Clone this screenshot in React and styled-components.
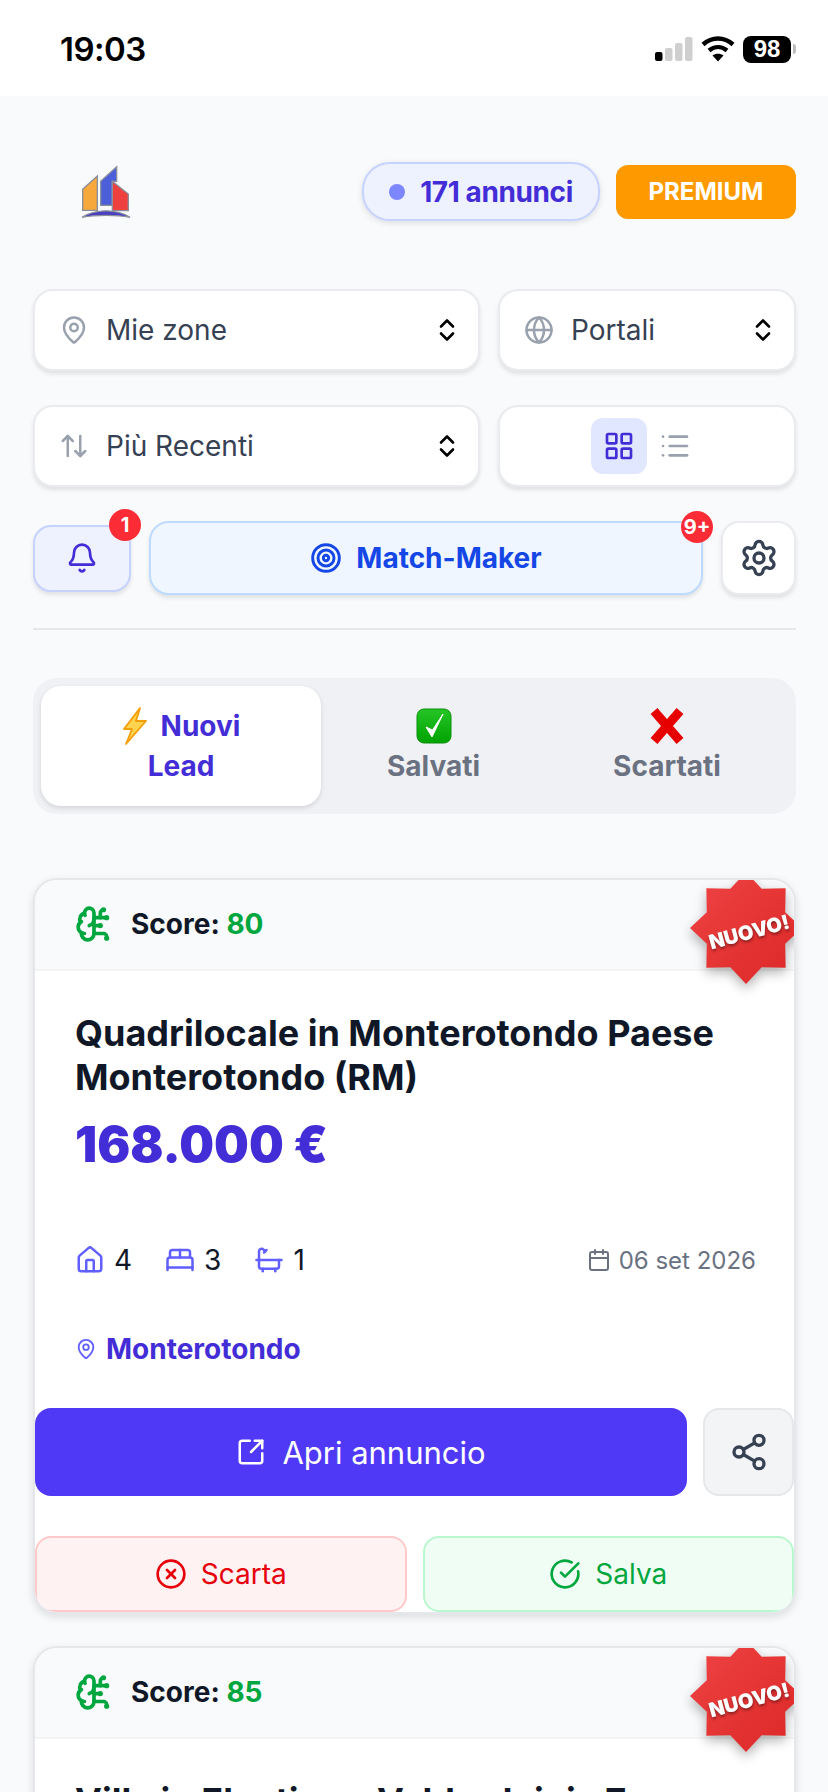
import React from "react"
import styled, { createGlobalStyle } from "styled-components"
import {
  MapPin,
  Globe,
  ArrowUpDown,
  LayoutGrid,
  List,
  Bell,
  Target,
  Settings,
  BrainCircuit,
  House,
  BedDouble,
  Bath,
  Calendar,
  SquareArrowOutUpRight,
  Share2,
  CircleX,
  CircleCheckBig,
} from "lucide-react"

const GlobalStyle = createGlobalStyle`
  * {
    box-sizing: border-box;
  }
  html, body {
    margin: 0;
    height: 1792px;
    overflow: hidden;
    background: #f9fafb;
    font-family: Inter, "Liberation Sans", sans-serif;
  }
`

const Page = styled.div`
  width: 828px;
  height: 1792px;
  overflow: hidden;
`

const StatusBar = styled.div`
  height: 96px;
  background: #fff;
  display: flex;
  align-items: center;
  justify-content: space-between;
  padding: 2px 32px 0 60px;
  color: #000;
`

const Clock = styled.span`
  font-family: Inter, sans-serif;
  font-size: 33px;
  font-weight: 600;
  letter-spacing: -0.5px;
`

const StatusIcons = styled.div`
  display: flex;
  align-items: center;
  gap: 8px;
`

const Battery = styled.div`
  display: flex;
  align-items: center;
  gap: 2px;
`

const BatteryBody = styled.span`
  width: 48px;
  height: 27px;
  border-radius: 8px;
  background: #000;
  color: #fff;
  font-family: "Liberation Sans", sans-serif;
  font-size: 24px;
  font-weight: 700;
  display: flex;
  align-items: center;
  justify-content: center;
`

const BatteryTip = styled.span`
  width: 3px;
  height: 10px;
  border-radius: 0 3px 3px 0;
  background: #bdbdbd;
`

const Content = styled.div`
  padding: 66px 32px 0 33px;
`

const Header = styled.div`
  display: flex;
  align-items: center;
  gap: 16px;
  height: 59px;
`

const LogoWrap = styled.div`
  flex: 1;
  padding-left: 27px;
  display: flex;
  align-items: center;
  svg {
    filter: blur(0.5px);
  }
`

const CountPill = styled.div`
  width: 238px;
  height: 59px;
  border-radius: 28px;
  border: 2px solid #c6d2ff;
  background: #eef2ff;
  color: #432dd7;
  font-size: 28px;
  font-weight: 700;
  letter-spacing: -0.4px;
  display: flex;
  align-items: center;
  justify-content: center;
  gap: 15px;
  box-shadow: 0 2px 6px rgba(0, 0, 0, 0.12);
`

const Dot = styled.span`
  width: 16px;
  height: 16px;
  border-radius: 50%;
  background: #7c86ff;
`

const PremiumButton = styled.div`
  width: 180px;
  height: 54px;
  border-radius: 12px;
  background: #fe9a00;
  color: #fff;
  font-size: 24px;
  font-weight: 700;
  display: flex;
  align-items: center;
  justify-content: center;
`

const FilterGrid = styled.div`
  display: grid;
  grid-template-columns: 447px 298px;
  column-gap: 18px;
  row-gap: 34px;
  margin-top: 68px;
`

const FilterBox = styled.div`
  height: 82px;
  border-radius: 20px;
  border: 2px solid #e9ebee;
  background: #fff;
  box-shadow: 0 3px 4px rgba(0, 0, 0, 0.1);
  display: flex;
  align-items: center;
  justify-content: ${(props) => (props.$center ? "center" : "flex-start")};
  padding: ${(props) => (props.$center ? "0" : "0 22px 0 24px")};
  gap: 17px;
  color: #364153;
  font-size: 28px;
`

const FilterLabel = styled.span`
  flex: 1;
`

const ViewButton = styled.span`
  width: 56px;
  height: 56px;
  border-radius: 12px;
  background: ${(props) => (props.$active ? "#e0e7ff" : "transparent")};
  color: ${(props) => (props.$active ? "#432dd7" : "#99a1af")};
  display: flex;
  align-items: center;
  justify-content: center;
`

const ViewToggle = styled.div`
  display: flex;
  align-items: center;
`

const ActionRow = styled.div`
  display: flex;
  align-items: center;
  gap: 18px;
  margin-top: 34px;
`

const BellButton = styled.div`
  position: relative;
  width: 98px;
  height: 67px;
  border-radius: 18px;
  border: 2px solid #c6d2ff;
  background: #eef2ff;
  color: #432dd7;
  box-shadow: 0 3px 4px rgba(0, 0, 0, 0.1);
  display: flex;
  align-items: center;
  justify-content: center;
`

const MatchButton = styled.div`
  position: relative;
  width: 554px;
  height: 74px;
  border-radius: 20px;
  border: 2px solid #bedbff;
  background: #eff6ff;
  color: #1447e6;
  font-size: 28px;
  font-weight: 700;
  box-shadow: 0 3px 4px rgba(0, 0, 0, 0.1);
  display: flex;
  align-items: center;
  justify-content: center;
  gap: 14px;
`

const GearButton = styled.div`
  width: 75px;
  height: 74px;
  border-radius: 18px;
  border: 2px solid #e9ebee;
  background: #fff;
  color: #364153;
  box-shadow: 0 3px 4px rgba(0, 0, 0, 0.1);
  display: flex;
  align-items: center;
  justify-content: center;
`

const CountBadge = styled.span`
  position: absolute;
  top: ${(props) => props.$top}px;
  right: ${(props) => props.$right}px;
  width: 32px;
  height: 32px;
  border-radius: 50%;
  background: #fb2c36;
  color: #fff;
  font-size: 20px;
  font-weight: 700;
  display: flex;
  align-items: center;
  justify-content: center;
`

const Divider = styled.div`
  height: 2px;
  background: #e5e7eb;
  margin-top: 33px;
`

const Tabs = styled.div`
  display: grid;
  grid-template-columns: 280px 225px 1fr;
  height: 136px;
  margin-top: 48px;
  padding: 8px;
  border-radius: 24px;
  background: #f0f1f5;
`

const Tab = styled.div`
  border-radius: 20px;
  background: ${(props) => (props.$active ? "#fff" : "transparent")};
  color: ${(props) => (props.$active ? "#432dd7" : "#6a7282")};
  box-shadow: ${(props) =>
    props.$active ? "0 2px 5px rgba(0, 0, 0, 0.12)" : "none"};
  font-size: 28px;
  font-weight: 700;
  line-height: 40px;
  text-align: center;
  display: flex;
  flex-direction: column;
  align-items: center;
  justify-content: center;
`

const TabLine = styled.span`
  height: 40px;
  display: flex;
  align-items: center;
  justify-content: center;
  gap: 13px;
`

const Listing = styled.article`
  position: relative;
  margin-top: ${(props) => props.$gap}px;
  border-radius: 24px;
  border: 2px solid #e5e7eb;
  background: #fff;
  overflow: hidden;
  box-shadow: 0 3px 8px rgba(0, 0, 0, 0.12);
`

const ListingTop = styled.div`
  height: 91px;
  padding: 0 40px 2px;
  background: #f9fafb;
  border-bottom: 2px solid #f3f4f6;
  display: flex;
  align-items: center;
  gap: 18px;
  color: #00a63e;
`

const ScoreText = styled.span`
  color: #101828;
  font-size: 28px;
  font-weight: 700;
`

const ScoreValue = styled.span`
  color: #00a63e;
`

const StarWrap = styled.div`
  position: absolute;
  top: -8px;
  right: -8px;
  width: 112px;
  height: 112px;
  filter: drop-shadow(0 5px 6px rgba(0, 0, 0, 0.3));
`

const Star = styled.div`
  width: 100%;
  height: 100%;
  background: linear-gradient(135deg, #ef4444, #dc2626);
  clip-path: polygon(
    50% 0%, 64% 15%, 85.4% 14.6%, 85% 36%, 100% 50%, 85% 64%, 85.4% 85.4%,
    64% 85%, 50% 100%, 36% 85%, 14.6% 85.4%, 15% 64%, 0% 50%, 15% 36%,
    14.6% 14.6%, 36% 15%
  );
  display: flex;
  align-items: center;
  justify-content: center;
`

const StarText = styled.span`
  margin: 8px 0 0 6px;
  color: #fff;
  font-size: 20px;
  font-weight: 900;
  transform: rotate(-15deg);
  text-shadow: 0 2px 3px rgba(0, 0, 0, 0.4);
`

const ListingBody = styled.div`
  padding: 40px 38px 0 40px;
`

const Title = styled.h2`
  margin: 0;
  color: #101828;
  font-size: 36px;
  font-weight: 700;
  line-height: 44px;
`

const Price = styled.div`
  margin-top: 18px;
  color: #432dd7;
  font-size: 49px;
  font-weight: 900;
  line-height: 56px;
`

const MetaRow = styled.div`
  display: flex;
  align-items: center;
  justify-content: space-between;
  margin-top: 71px;
  height: 32px;
`

const Features = styled.div`
  display: flex;
  gap: 33px;
`

const Feature = styled.span`
  display: flex;
  align-items: center;
  gap: 9px;
  color: #101828;
  font-size: 28px;
  svg {
    color: #615fff;
  }
`

const DateLabel = styled.span`
  display: flex;
  align-items: center;
  gap: 8px;
  color: #6a7282;
  font-size: 24px;
`

const Place = styled.div`
  display: flex;
  align-items: center;
  gap: 9px;
  margin-top: 56px;
  color: #432dd7;
  font-size: 28px;
  font-weight: 700;
  svg {
    color: #615fff;
  }
`

const OpenRow = styled.div`
  display: flex;
  gap: 16px;
  margin-top: 42px;
`

const OpenButton = styled.div`
  width: 652px;
  height: 88px;
  border-radius: 16px;
  background: #4f39f6;
  color: #fff;
  font-size: 31px;
  font-weight: 400;
  display: flex;
  align-items: center;
  justify-content: center;
  gap: 16px;
`

const ShareButton = styled.div`
  flex: 1;
  height: 88px;
  border-radius: 16px;
  border: 2px solid #e5e7eb;
  background: #f3f4f6;
  color: #364153;
  display: flex;
  align-items: center;
  justify-content: center;
`

const DecisionRow = styled.div`
  display: grid;
  grid-template-columns: repeat(2, 1fr);
  gap: 16px;
  margin-top: 40px;
`

const DecisionButton = styled.div`
  height: 76px;
  border-radius: 16px;
  border: 2px solid ${(props) => (props.$kind === "save" ? "#b9f8cf" : "#ffc9c9")};
  background: ${(props) => (props.$kind === "save" ? "#f0fdf4" : "#fef2f2")};
  color: ${(props) => (props.$kind === "save" ? "#00a63e" : "#e7000b")};
  font-size: 28px;
  font-weight: 400;
  display: flex;
  align-items: center;
  justify-content: center;
  gap: 14px;
`

const SelectArrows = () => (
  <svg width="18" height="24" viewBox="0 0 18 24" fill="none" stroke="#000" strokeWidth="2.6" strokeLinecap="round" strokeLinejoin="round">
    <path d="M3 8.5 9 2.5l6 6" />
    <path d="M3 15.5l6 6 6-6" />
  </svg>
)

const Logo = () => (
  <svg width="90" height="80" viewBox="0 0 270 240">
    <g stroke="#8a8f9c" strokeWidth="4">
      <path d="M68 112 112 72v103H68Z" fill="#f6a83c" />
      <path d="M122 88 170 44v44h-13v72h-35Z" fill="#4c5fd8" />
      <path d="M157 88l48 38v50h-48Z" fill="#ef4040" />
    </g>
    <path d="M66 196c40-26 104-26 144 0-40-8-104-8-144 0Z" fill="#4a3fc0" stroke="#8a8f9c" strokeWidth="4" />
  </svg>
)

const SignalBars = () => (
  <svg width="38" height="24" viewBox="0 0 38 24">
    <rect x="0" y="15" width="7.500" height="9" rx="2" fill="#000" />
    <rect x="10" y="11" width="7.500" height="13" rx="2" fill="#cfcfcf" />
    <rect x="20" y="6" width="7.500" height="18" rx="2" fill="#cfcfcf" />
    <rect x="30" y="0" width="7.500" height="24" rx="2" fill="#cfcfcf" />
  </svg>
)

const Wifi = () => (
  <svg width="34" height="26" viewBox="0 0 34 26" fill="none" stroke="#000" strokeWidth="4.4">
    <path d="M2 8.5c9-8 21-8 30 0" />
    <path d="M8 14.5c5.500-4.500 12.500-4.500 18 0" />
    <path d="M17 25.500 11.500 19.500c3-2.500 8-2.500 11 0Z" fill="#000" stroke="none" />
  </svg>
)

const Bolt = () => (
  <svg width="26" height="38" viewBox="0 0 26 38">
    <path d="M18 1 2 22h8L4 37 24 14h-10Z" fill="#ffd34d" stroke="#f59e0b" strokeWidth="1.8" strokeLinejoin="round" />
  </svg>
)

const CheckEmoji = () => (
  <svg width="36" height="36" viewBox="0 0 36 36">
    <defs>
      <linearGradient id="checkFill" x1="0" y1="0" x2="0" y2="1">
        <stop offset="0" stopColor="#26c526" />
        <stop offset="1" stopColor="#00a300" />
      </linearGradient>
    </defs>
    <rect x="1" y="1" width="34" height="34" rx="7" fill="url(#checkFill)" stroke="#0a8f0a" />
    <path d="M10 19l6 10L27 6 16.500 22Z" fill="#fff" stroke="#fff" strokeWidth="1" strokeLinejoin="round" />
  </svg>
)

const CrossEmoji = () => (
  <svg width="38" height="36" viewBox="0 0 38 36">
    <path d="M6 3 32 33M32 3 6 33" stroke="#e60000" strokeWidth="9" />
  </svg>
)

const Badge = () => (
  <StarWrap>
    <Star>
      <StarText>NUOVO!</StarText>
    </Star>
  </StarWrap>
)

const App = () => {
  return (
    <Page>
      <GlobalStyle />
      <StatusBar>
        <Clock>19:03</Clock>
        <StatusIcons>
          <SignalBars />
          <Wifi />
          <Battery>
            <BatteryBody>98</BatteryBody>
            <BatteryTip />
          </Battery>
        </StatusIcons>
      </StatusBar>
      <Content>
        <Header>
          <LogoWrap>
            <Logo />
          </LogoWrap>
          <CountPill>
            <Dot />
            171 annunci
          </CountPill>
          <PremiumButton>PREMIUM</PremiumButton>
        </Header>

        <FilterGrid>
          <FilterBox>
            <MapPin size={30} color="#99a1af" strokeWidth={2} />
            <FilterLabel>Mie zone</FilterLabel>
            <SelectArrows />
          </FilterBox>
          <FilterBox>
            <Globe size={30} color="#99a1af" strokeWidth={2} />
            <FilterLabel>Portali</FilterLabel>
            <SelectArrows />
          </FilterBox>
          <FilterBox>
            <ArrowUpDown size={30} color="#99a1af" strokeWidth={2} />
            <FilterLabel>Più Recenti</FilterLabel>
            <SelectArrows />
          </FilterBox>
          <FilterBox $center>
            <ViewToggle>
              <ViewButton $active>
                <LayoutGrid size={32} strokeWidth={2} />
              </ViewButton>
              <ViewButton>
                <List size={32} strokeWidth={2} />
              </ViewButton>
            </ViewToggle>
          </FilterBox>
        </FilterGrid>

        <ActionRow>
          <BellButton>
            <Bell size={32} strokeWidth={2} />
            <CountBadge $top={-18} $right={-12}>1</CountBadge>
          </BellButton>
          <MatchButton>
            <Target size={32} strokeWidth={2.2} />
            Match-Maker
            <CountBadge $top={-12} $right={-12}>9+</CountBadge>
          </MatchButton>
          <GearButton>
            <Settings size={40} strokeWidth={2} />
          </GearButton>
        </ActionRow>

        <Divider />

        <Tabs>
          <Tab $active>
            <TabLine>
              <Bolt />
              Nuovi
            </TabLine>
            <TabLine>Lead</TabLine>
          </Tab>
          <Tab>
            <TabLine>
              <CheckEmoji />
            </TabLine>
            <TabLine>Salvati</TabLine>
          </Tab>
          <Tab>
            <TabLine>
              <CrossEmoji />
            </TabLine>
            <TabLine>Scartati</TabLine>
          </Tab>
        </Tabs>

        <Listing $gap={64}>
          <ListingTop>
            <BrainCircuit size={38} strokeWidth={2.3} />
            <ScoreText>
              Score: <ScoreValue>80</ScoreValue>
            </ScoreText>
          </ListingTop>
          <Badge />
          <ListingBody>
            <Title>Quadrilocale in Monterotondo Paese Monterotondo (RM)</Title>
            <Price>168.000 €</Price>
            <MetaRow>
              <Features>
                <Feature>
                  <House size={30} strokeWidth={2} />4
                </Feature>
                <Feature>
                  <BedDouble size={30} strokeWidth={2} />3
                </Feature>
                <Feature>
                  <Bath size={30} strokeWidth={2} />1
                </Feature>
              </Features>
              <DateLabel>
                <Calendar size={24} strokeWidth={2} />
                06 set 2026
              </DateLabel>
            </MetaRow>
            <Place>
              <MapPin size={22} strokeWidth={2} />
              Monterotondo
            </Place>
          </ListingBody>
          <OpenRow>
            <OpenButton>
              <SquareArrowOutUpRight size={30} strokeWidth={2} />
              Apri annuncio
            </OpenButton>
            <ShareButton>
              <Share2 size={40} strokeWidth={2} />
            </ShareButton>
          </OpenRow>
          <DecisionRow>
            <DecisionButton>
              <CircleX size={32} strokeWidth={2} />
              Scarta
            </DecisionButton>
            <DecisionButton $kind="save">
              <CircleCheckBig size={32} strokeWidth={2} />
              Salva
            </DecisionButton>
          </DecisionRow>
        </Listing>

        <Listing $gap={32}>
          <ListingTop>
            <BrainCircuit size={38} strokeWidth={2.3} />
            <ScoreText>
              Score: <ScoreValue>85</ScoreValue>
            </ScoreText>
          </ListingTop>
          <Badge />
          <ListingBody>
            <Title>Villa in Elvetino - Valdardeinia 7</Title>
          </ListingBody>
        </Listing>
      </Content>
    </Page>
  )
}

export default App
